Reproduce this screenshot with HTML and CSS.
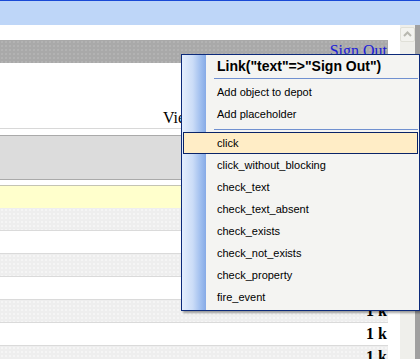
FILE: index.html
```html
<!DOCTYPE html>
<html>
<head>
<meta charset="utf-8">
<link rel="stylesheet" href="styles.css">
</head>
<body>
<div class="header"></div>
<div class="main">
  <div class="content">
    <div class="gap-top"></div>
    <div class="topbar"><a href="#">Sign Out</a></div>
    <div class="viewrow">View</div>
    <div class="gap-small"></div>
    <div class="grayblock"></div>
    <div class="gap-mid"></div>
    <div class="yellow"></div>
    <div class="row alt">1 k</div>
    <div class="row">1 k</div>
    <div class="row alt">1 k</div>
    <div class="row">1 k</div>
    <div class="row alt">1 k</div>
    <div class="row">1 k</div>
    <div class="row alt">1 k</div>
  </div>
  <div class="vgap"></div>
  <div class="scroll">
    <div class="up"><svg width="13" height="13" viewBox="0 0 13 13"><path d="M3 8 L6.5 4.5 L10 8" fill="none" stroke="#b8b8b0" stroke-width="2"/></svg></div>
  </div>
  <div class="edge"></div>
</div>
<div class="menu">
  <div class="title">Link("text"=&gt;"Sign Out")</div>
  <div class="sep"></div>
  <div class="item">Add object to depot</div>
  <div class="item">Add placeholder</div>
  <div class="sep sep2"></div>
  <div class="item active">click</div>
  <div class="item">click_without_blocking</div>
  <div class="item">check_text</div>
  <div class="item">check_text_absent</div>
  <div class="item">check_exists</div>
  <div class="item">check_not_exists</div>
  <div class="item">check_property</div>
  <div class="item">fire_event</div>
</div>
</body>
</html>
```
FILE: styles.css
```css
* { box-sizing: border-box; }
html, body { margin: 0; padding: 0; }
body {
  width: 420px;
  height: 359px;
  overflow: hidden;
  background: #fff;
  font-family: "Liberation Serif", serif;
  position: relative;
}
.header {
  height: 25px;
  border-top: 1px solid #1a4ad6;
  background: #bed6f8;
}
.main {
  display: flex;
  height: 334px;
}
.content {
  width: 388px;
  flex: none;
  overflow: hidden;
}
.gap-top { height: 15px; }
.topbar {
  height: 23px;
  background-color: #a9a9a9;
  background-image: radial-gradient(circle, rgba(255,255,255,0.18) 0.6px, transparent 0.9px);
  background-size: 4px 4px;
  text-align: right;
  padding-right: 1px;
  font-size: 16px;
  line-height: 21px;
  white-space: nowrap;
}
.topbar a { color: #1c1cd8; text-decoration: underline; }
.viewrow {
  height: 66px;
  border-bottom: 1px solid #d8d8d8;
  padding: 46px 0 0 163px;
  font-size: 16px;
  line-height: 18px;
  white-space: nowrap;
}
.gap-small { height: 6px; }
.grayblock {
  height: 45px;
  border-top: 1px solid #aaa;
  border-bottom: 1px solid #aaa;
  background: #dcdcdc;
}
.gap-mid { height: 5px; }
.yellow {
  height: 23px;
  border-top: 1px solid #c4c4b4;
  background: #ffffcc;
}
.row {
  height: 23px;
  border-bottom: 1px solid #dadada;
  line-height: 22px;
  padding-left: 366px;
  font-weight: bold;
  font-size: 16px;
  white-space: nowrap;
}
.row.alt {
  background-color: #eeeeee;
  background-image: radial-gradient(circle, rgba(255,255,255,0.6) 0.6px, transparent 0.9px);
  background-size: 4px 4px;
}
.vgap { width: 12px; flex: none; }
.scroll {
  width: 15px;
  flex: none;
  background: #efefeb;
  padding-top: 2px;
}
.up {
  width: 15px;
  height: 15px;
  border: 1px solid #e0e0d8;
  border-radius: 2px;
  background: #f3f3ef;
  display: flex;
  align-items: center;
  justify-content: center;
}
.up svg { display: block; }
.edge { flex: 1; background: #a0a0a0; }

.menu {
  position: absolute;
  left: 181px;
  top: 54px;
  width: 239px;
  height: 257px;
  border: 1px solid #0c2a7a;
  background-color: #f4f4f2;
  background-image: linear-gradient(to right, #e4eefd 0%, #cbdcf7 45%, #9cbcee 80%, #86aae6 100%);
  background-size: 24px 100%;
  background-repeat: no-repeat;
  box-shadow: 2px 2px 2px rgba(0,0,0,0.35);
  font-family: "Liberation Sans", Arial, sans-serif;
  color: #000;
}
.title {
  height: 23px;
  line-height: 23px;
  padding-left: 35px;
  font-weight: bold;
  font-size: 14px;
  white-space: nowrap;
}
.sep {
  height: 1px;
  background: #7090d0;
  margin: 0 1px 2px 32px;
}
.sep2 { margin-top: 4px; }
.item {
  height: 22px;
  line-height: 22px;
  padding-left: 35px;
  font-size: 11px;
  white-space: nowrap;
}
.item.active {
  margin: 0 1px;
  padding-left: 33px;
  line-height: 20px;
  border: 1px solid #0a2468;
  background: #ffedc6;
}
```
